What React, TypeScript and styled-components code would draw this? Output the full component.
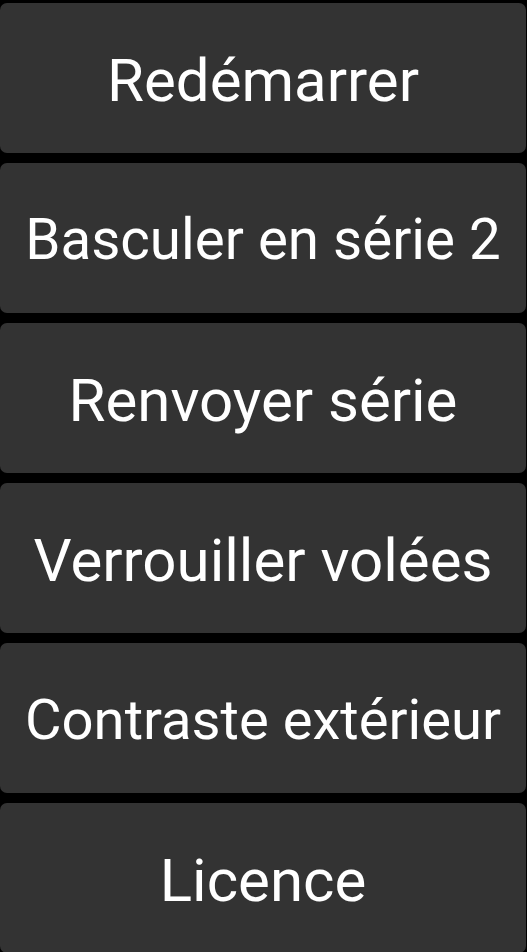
import React from "react";
import styled, { createGlobalStyle } from "styled-components";

const Global = createGlobalStyle`
  html, body { margin: 0; padding: 0; background: #000; }
  body { font-family: Roboto, "Noto Sans", sans-serif; }
`;

const Menu = styled.div`
  display: flex;
  flex-direction: column;
  gap: 10px;
  padding-top: 3px;
  width: 526px;
  height: 952px;
  overflow: hidden;
  background: #000;
`;

const MenuButton = styled.button<{ $size: number }>`
  flex: 0 0 150px;
  height: 150px;
  display: flex;
  align-items: center;
  justify-content: center;
  border: none;
  border-radius: 7px;
  background: #333333;
  color: #ffffff;
  font-family: Roboto, "Noto Sans", sans-serif;
  font-size: ${(p) => p.$size}px;
  font-weight: 400;
  padding: 4px 0 0;
  white-space: nowrap;
`;

const items: { label: string; size: number }[] = [
  { label: "Redémarrer", size: 60 },
  { label: "Basculer en série 2", size: 56.5 },
  { label: "Renvoyer série", size: 60 },
  { label: "Verrouiller volées", size: 60 },
  { label: "Contraste extérieur", size: 56.2 },
  { label: "Licence", size: 60 },
];

export default function App() {
  return (
    <>
      <Global />
      <Menu>
        {items.map((t) => (
          <MenuButton key={t.label} $size={t.size}>
            {t.label}
          </MenuButton>
        ))}
      </Menu>
    </>
  );
}
